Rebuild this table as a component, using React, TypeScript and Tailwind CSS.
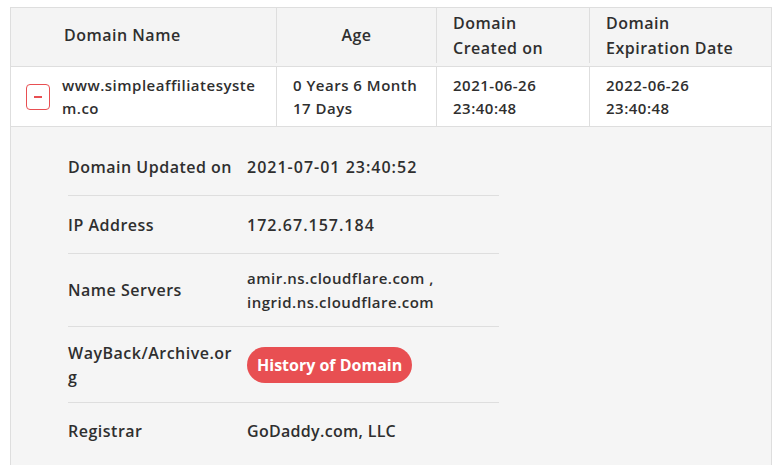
import React from 'react'

const rows = [
  { label: 'Domain Updated on', value: <span className="text-base tracking-[1px]">2021-07-01 23:40:52</span>, h: 'h-[58px]' },
  { label: 'IP Address', value: <span className="text-base tracking-[1px]">172.67.157.184</span>, h: 'h-[58px]' },
  {
    label: 'Name Servers',
    value: (
      <span className="text-[15px] leading-6">
        amir.ns.cloudflare.com ,<br />
        ingrid.ns.cloudflare.com
      </span>
    ),
    h: 'h-[73px]',
  },
  {
    label: 'WayBack/Archive.org',
    value: (
      <button className="h-9 px-[10px] rounded-full bg-[#e84f52] text-white text-base font-bold tracking-normal">
        History of Domain
      </button>
    ),
    h: 'h-[76px]',
  },
  { label: 'Registrar', value: <span className="text-base tracking-[0.3px]">GoDaddy.com, LLC</span>, h: 'h-[56px]' },
]

export default function App() {
  return (
    <div className="w-[775px] h-[465px] bg-white pt-[7px] pl-[10px] overflow-hidden font-['Open_Sans',sans-serif] text-[#2f2f2f] font-semibold tracking-[0.5px]">
      <div className="w-[762px] border border-[#dedede]">
        {/* Header */}
        <div className="grid grid-cols-[265px_160px_153px_182px] bg-[#f4f4f4] border-b border-[#dedede] h-[59px] text-base leading-[25px] pb-[3px]">
          <div className="flex items-center pl-[53px]">Domain Name</div>
          <div className="flex items-center justify-center border-l border-[#dedede]">Age</div>
          <div className="flex items-center px-4 border-l border-[#dedede]">
            Domain
            <br />
            Created on
          </div>
          <div className="flex items-center px-4 border-l border-[#dedede]">
            <span>
              Domain
              <br />
              Expiration Date
            </span>
          </div>
        </div>

        {/* Body row */}
        <div className="grid grid-cols-[265px_160px_153px_182px] bg-white border-b border-[#dedede] h-[60px] text-[15px] leading-[23px]">
          <div className="flex items-center pl-[15px] pr-4">
            <div className="w-6 h-[26px] shrink-0 rounded-[4px] border-[1.5px] border-[#e84f52] flex items-center justify-center mr-3">
              <div className="w-2 h-[2px] bg-[#e84f52]" />
            </div>
            <div className="break-all">www.simpleaffiliatesystem.co</div>
          </div>
          <div className="flex items-center px-4 border-l border-[#dedede]">0 Years 6 Month 17 Days</div>
          <div className="flex items-center px-4 border-l border-[#dedede]">
            <span>
              2021-06-26
              <br />
              23:40:48
            </span>
          </div>
          <div className="flex items-center px-4 border-l border-[#dedede]">
            <span>
              2022-06-26
              <br />
              23:40:48
            </span>
          </div>
        </div>

        {/* Expanded details */}
        <div className="bg-[#f5f5f5] pt-[11px] pl-[57px] h-[340px]">
          <div className="w-[431px]">
            {rows.map((r, i) => (
              <div
                key={r.label}
                className={`flex items-center ${r.h} ${i < rows.length - 1 ? 'border-b border-[#dedede]' : ''}`}
              >
                <div className="w-[179px] shrink-0 pr-[9px] text-base leading-6 break-all">{r.label}</div>
                <div>{r.value}</div>
              </div>
            ))}
          </div>
        </div>
      </div>
    </div>
  )
}
